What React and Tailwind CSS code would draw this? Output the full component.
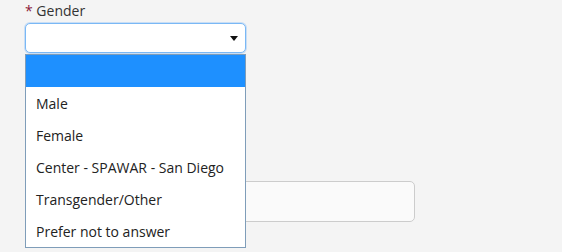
export default function App() {
  const opts = ["Male", "Female", "Center - SPAWAR - San Diego", "Transgender/Other", "Prefer not to answer"];
  return (
    <div className="w-[562px] h-[252px] bg-[#f4f4f4] overflow-hidden relative" style={{ fontFamily: '"Open Sans", sans-serif' }}>
      <div className="pl-[25px] pt-[1px]">
        <div className="text-[14px] leading-[20px] text-[#333]"><span className="text-[#8b1a3a]">*</span> Gender</div>
        <div className="mt-[2px] w-[221px] h-[30px] bg-white border border-[#7ab8f5] rounded-[5px] shadow-[0_0_0_1px_rgba(120,180,245,0.35)] flex items-center justify-end pr-[7px]">
          <svg width="8" height="5" viewBox="0 0 8 5"><path d="M0 0H8L4 5Z" fill="#111" /></svg>
        </div>
        <div className="mt-[128px] w-[390px] h-[41px] bg-[#fafafa] border border-[#cccccc] rounded-[5px]" />
      </div>
      <div className="absolute left-[25px] top-[54px] w-[221px] bg-white border border-[#7f9db9] text-[14px] text-[#222]">
        <div className="h-[32px] bg-[#1e90ff]" />
        {opts.map((o) => (
          <div key={o} className="h-[32px] leading-[32px] pt-[1px] pl-[10px] overflow-hidden">{o}</div>
        ))}
      </div>
    </div>
  );
}
